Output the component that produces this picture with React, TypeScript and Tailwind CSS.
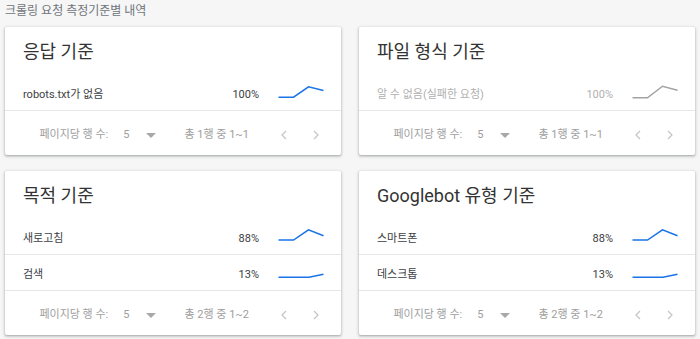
import React from 'react';

type Point = [number, number];

interface Row {
  label: string;
  pct: string;
  line: Point[];
}

interface Card {
  title: string;
  rows: Row[];
  total: string;
  muted?: boolean;
}

// sparkline coords: x 0..46, y 0..20
const PEAK_A: Point[] = [[0.5, 12.2], [15.5, 12.2], [30.5, 1.8], [45.5, 5.5]];
const PEAK_B: Point[] = [[0.5, 11], [15.5, 11], [30.5, 0.8], [45.5, 6.7]];
const FLAT: Point[] = [[0.5, 12.3], [31, 12.3], [45.5, 9.3]];
const PEAK_C: Point[] = [[0.5, 12.8], [15.5, 12.8], [30.5, 1.2], [45.5, 5.2]];

const CARDS: Card[] = [
  { title: '응답 기준', rows: [{ label: 'robots.txt가 없음', pct: '100%', line: PEAK_A }], total: '총 1행 중 1~1' },
  { title: '파일 형식 기준', rows: [{ label: '알 수 없음(실패한 요청)', pct: '100%', line: PEAK_C }], total: '총 1행 중 1~1', muted: true },
  {
    title: '목적 기준',
    rows: [
      { label: '새로고침', pct: '88%', line: PEAK_B },
      { label: '검색', pct: '13%', line: FLAT },
    ],
    total: '총 2행 중 1~2',
  },
  {
    title: 'Googlebot 유형 기준',
    rows: [
      { label: '스마트폰', pct: '88%', line: PEAK_B },
      { label: '데스크톱', pct: '13%', line: FLAT },
    ],
    total: '총 2행 중 1~2',
  },
];

function Sparkline({ points, muted }: { points: Point[]; muted?: boolean }) {
  return (
    <svg width="46" height="20" viewBox="0 0 46 20" className="ml-[19px] shrink-0">
      <polyline
        points={points.map((p) => p.join(',')).join(' ')}
        fill="none"
        stroke={muted ? '#a3a3a3' : '#1a73e8'}
        strokeWidth="1.5"
      />
    </svg>
  );
}

function Chevron({ dir }: { dir: 'left' | 'right' }) {
  return (
    <span className="flex h-[24px] w-[24px] items-center justify-center">
      <svg width="24" height="24" viewBox="0 0 24 24">
        <polyline
          points={dir === 'left' ? '14,8 10,12 14,16' : '10,8 14,12 10,16'}
          fill="none"
          stroke="#c4c4c4"
          strokeWidth="1.2"
        />
      </svg>
    </span>
  );
}

function MetricCard({ card }: { card: Card }) {
  const rowText = card.muted ? 'text-[#b0b0b0]' : 'text-[#3c4043]';
  return (
    <div className="flex flex-col rounded-[2px] bg-white shadow-[0_1px_2px_rgba(60,64,67,0.3),0_1px_3px_1px_rgba(60,64,67,0.15)]">
      <div className="h-[48px] px-[18px] pt-[13px] text-[18px] leading-[24px] text-[#333333]">{card.title}</div>
      {card.rows.map((r) => (
        <div key={r.label} className="flex h-[36px] items-center border-b border-[#e6e6e6] pl-[18px] pr-[17px] pt-[5px] text-[11px]">
          <span className={`flex-1 truncate ${rowText}`}>{r.label}</span>
          <span className={rowText}>{r.pct}</span>
          <Sparkline points={r.line} muted={card.muted} />
        </div>
      ))}
      <div className="flex h-[44px] items-center justify-end pr-[13px] pt-[4px] text-[11px] text-[#9e9e9e]">
        <span>페이지당 행 수:</span>
        <span className="ml-[15px]">5</span>
        <span className="ml-[10px] flex h-[24px] w-[24px] items-center justify-center">
          <svg width="10" height="5" viewBox="0 0 10 5">
            <path d="M0 0l5 5 5-5z" fill="#a8a8a8" />
          </svg>
        </span>
        <span className="ml-[21px]">{card.total}</span>
        <span className="ml-[23px]">
          <Chevron dir="left" />
        </span>
        <span className="ml-[8px]">
          <Chevron dir="right" />
        </span>
      </div>
    </div>
  );
}

export default function App() {
  return (
    <div
      className="h-[339px] w-[700px] bg-[#f6f6f6] px-[5px]"
      style={{ fontFamily: "Roboto, 'Noto Sans CJK KR', sans-serif" }}
    >
      <div className="h-[27px] pt-[2px] text-[12px] leading-[18px] text-[#70757a]">크롤링 요청 측정기준별 내역</div>
      <div className="grid grid-cols-2 gap-x-[18px] gap-y-[16px]">
        {CARDS.map((c) => (
          <MetricCard key={c.title} card={c} />
        ))}
      </div>
    </div>
  );
}
